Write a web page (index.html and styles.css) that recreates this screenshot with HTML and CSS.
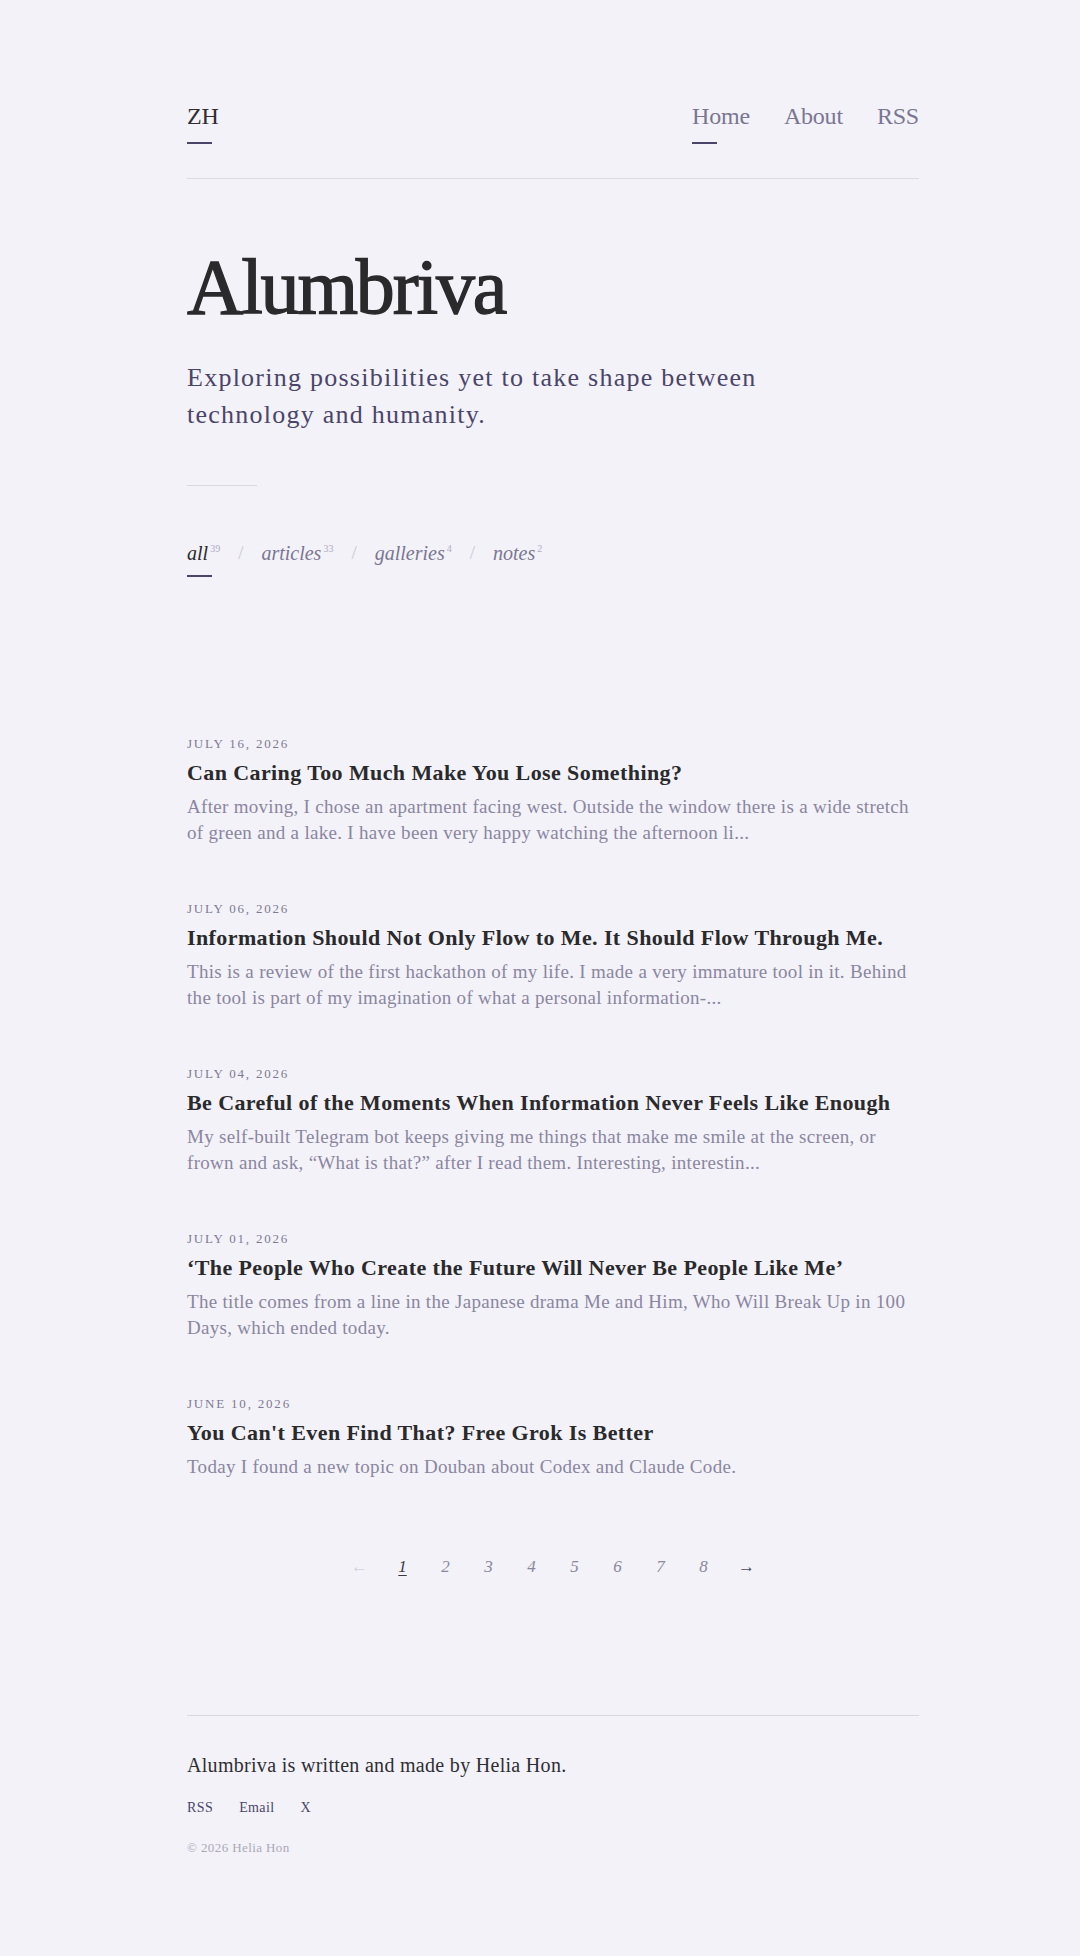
FILE: index.html
```html
<!DOCTYPE html>
<html lang="en">
<head>
<meta charset="utf-8">
<title>Alumbriva</title>
<link rel="stylesheet" href="styles.css">
</head>
<body>
<div class="page">
  <header class="site-header">
    <a class="brand nav-link active" href="#">ZH</a>
    <nav class="main-nav">
      <a class="nav-link active" href="#">Home</a>
      <a class="nav-link" href="#">About</a>
      <a class="nav-link" href="#">RSS</a>
    </nav>
  </header>

  <section class="hero">
    <h1 class="site-title">Alumbriva</h1>
    <p class="tagline">Exploring possibilities yet to take shape between technology and humanity.</p>
    <hr class="short-rule">
    <div class="filters">
      <a class="filter active" href="#"><span class="filter-label">all<sup>39</sup></span></a>
      <span class="sep">/</span>
      <a class="filter" href="#"><span class="filter-label">articles<sup>33</sup></span></a>
      <span class="sep">/</span>
      <a class="filter" href="#"><span class="filter-label">galleries<sup>4</sup></span></a>
      <span class="sep">/</span>
      <a class="filter" href="#"><span class="filter-label">notes<sup>2</sup></span></a>
    </div>
  </section>

  <main class="posts">
    <article class="post">
      <div class="post-date">JULY 16, 2026</div>
      <h2 class="post-title">Can Caring Too Much Make You Lose Something?</h2>
      <p class="post-excerpt">After moving, I chose an apartment facing west. Outside the window there is a wide stretch of green and a lake. I have been very happy watching the afternoon li...</p>
    </article>
    <article class="post">
      <div class="post-date">JULY 06, 2026</div>
      <h2 class="post-title">Information Should Not Only Flow to Me. It Should Flow Through Me.</h2>
      <p class="post-excerpt">This is a review of the first hackathon of my life. I made a very immature tool in it. Behind the tool is part of my imagination of what a personal information-...</p>
    </article>
    <article class="post">
      <div class="post-date">JULY 04, 2026</div>
      <h2 class="post-title">Be Careful of the Moments When Information Never Feels Like Enough</h2>
      <p class="post-excerpt">My self-built Telegram bot keeps giving me things that make me smile at the screen, or frown and ask, “What is that?” after I read them. Interesting, interestin...</p>
    </article>
    <article class="post">
      <div class="post-date">JULY 01, 2026</div>
      <h2 class="post-title">‘The People Who Create the Future Will Never Be People Like Me’</h2>
      <p class="post-excerpt">The title comes from a line in the Japanese drama Me and Him, Who Will Break Up in 100 Days, which ended today.</p>
    </article>
    <article class="post">
      <div class="post-date">JUNE 10, 2026</div>
      <h2 class="post-title">You Can't Even Find That? Free Grok Is Better</h2>
      <p class="post-excerpt">Today I found a new topic on Douban about Codex and Claude Code.</p>
    </article>
  </main>

  <nav class="pagination">
    <span class="pg arrow disabled">←</span>
    <a class="pg current" href="#">1</a>
    <a class="pg" href="#">2</a>
    <a class="pg" href="#">3</a>
    <a class="pg" href="#">4</a>
    <a class="pg" href="#">5</a>
    <a class="pg" href="#">6</a>
    <a class="pg" href="#">7</a>
    <a class="pg" href="#">8</a>
    <a class="pg arrow next" href="#">→</a>
  </nav>

  <footer class="site-footer">
    <p class="footer-text">Alumbriva is written and made by Helia Hon.</p>
    <div class="footer-links">
      <a href="#">RSS</a>
      <a href="#">Email</a>
      <a href="#">X</a>
    </div>
    <p class="copyright">© 2026 Helia Hon</p>
  </footer>
</div>
</body>
</html>
```

FILE: styles.css
```css
* { box-sizing: border-box; }

html, body {
  margin: 0;
  padding: 0;
  background: #f3f2f8;
}

body {
  font-family: "Liberation Serif", "DejaVu Serif", serif;
  color: #2b2b2e;
}

a { text-decoration: none; color: inherit; }

.page {
  width: 732px;
  margin-left: 187px;
  padding-bottom: 90px;
}

/* header */
.site-header {
  display: flex;
  justify-content: space-between;
  align-items: flex-start;
  padding-top: 102px;
  padding-bottom: 34px;
  border-bottom: 1px solid #dcdbe3;
}

.main-nav {
  display: flex;
  gap: 34px;
}

.nav-link {
  display: flex;
  flex-direction: column;
  font-size: 24px;
  line-height: 29px;
  color: #7a7692;
  letter-spacing: -0.2px;
}

.nav-link.brand { color: #2e2e33; }

.nav-link.active::after {
  content: "";
  display: block;
  width: 25px;
  height: 2px;
  margin-top: 11px;
  background: #4a4568;
}

/* hero */
.hero {
  padding-top: 69px;
}

.site-title {
  margin: 0;
  font-size: 78px;
  line-height: 78px;
  font-weight: 400;
  letter-spacing: -2.2px;
  color: #2a2a2c;
  -webkit-text-stroke: 1.3px #2a2a2c;
}

.tagline {
  margin: 33px 0 0;
  max-width: 620px;
  font-size: 26px;
  line-height: 37px;
  letter-spacing: 1.25px;
  color: #4a4568;
}

.short-rule {
  width: 70px;
  height: 1px;
  margin: 52px 0 0;
  border: 0;
  background: #d9d8e0;
}

.filters {
  display: flex;
  align-items: flex-start;
  gap: 18px;
  margin-top: 53px;
  font-style: italic;
  font-size: 20px;
  line-height: 28px;
}

.filter {
  display: flex;
  flex-direction: column;
  color: #7a7692;
}

.filter.active { color: #2b2b2e; }

.filter.active::after {
  content: "";
  display: block;
  width: 25px;
  height: 2px;
  margin-top: 8px;
  background: #4a4568;
}

.filter sup {
  font-size: 10px;
  line-height: 0;
  vertical-align: 8px;
  margin-left: 2px;
  font-style: normal;
  color: #aeacbd;
}

.sep {
  color: #cbc9d5;
  font-style: normal;
  font-size: 19px;
}

/* posts */
.posts {
  margin-top: 157px;
}

.post { margin-bottom: 53px; }
.post:last-child { margin-bottom: 0; }

.post-date {
  font-size: 13px;
  line-height: 20px;
  letter-spacing: 1.8px;
  color: #7d7a93;
}

.post-title {
  margin: 4px 0 0;
  font-size: 22px;
  line-height: 30px;
  font-weight: 700;
  letter-spacing: 0.4px;
  color: #2a2a2c;
}

.post-excerpt {
  margin: 6px 0 0;
  font-size: 19px;
  line-height: 26px;
  letter-spacing: 0.3px;
  color: #8a86a0;
}

/* pagination */
.pagination {
  display: flex;
  justify-content: center;
  gap: 23px;
  margin-top: 75px;
  font-style: italic;
  font-size: 17px;
  line-height: 24px;
}

.pg {
  width: 20px;
  text-align: center;
  color: #8a879b;
}

.pg.current {
  color: #3c3a48;
  text-decoration: underline;
  text-underline-offset: 3px;
}

.pg.arrow { font-style: normal; }
.pg.disabled { color: #d2d0db; }
.pg.next { color: #4c4a5a; }

/* footer */
.site-footer {
  margin-top: 136px;
  padding-top: 35px;
  border-top: 1px solid #d9d8e0;
}

.footer-text {
  margin: 0;
  font-size: 20px;
  line-height: 28px;
  letter-spacing: 0.3px;
  color: #2e2e33;
}

.footer-links {
  display: flex;
  gap: 26px;
  margin-top: 19px;
  font-size: 14px;
  line-height: 20px;
  letter-spacing: 0.4px;
}

.footer-links a { color: #4a4568; }

.copyright {
  margin: 21px 0 0;
  font-size: 13px;
  line-height: 18px;
  letter-spacing: 0.4px;
  color: #aaa8b7;
}
```
